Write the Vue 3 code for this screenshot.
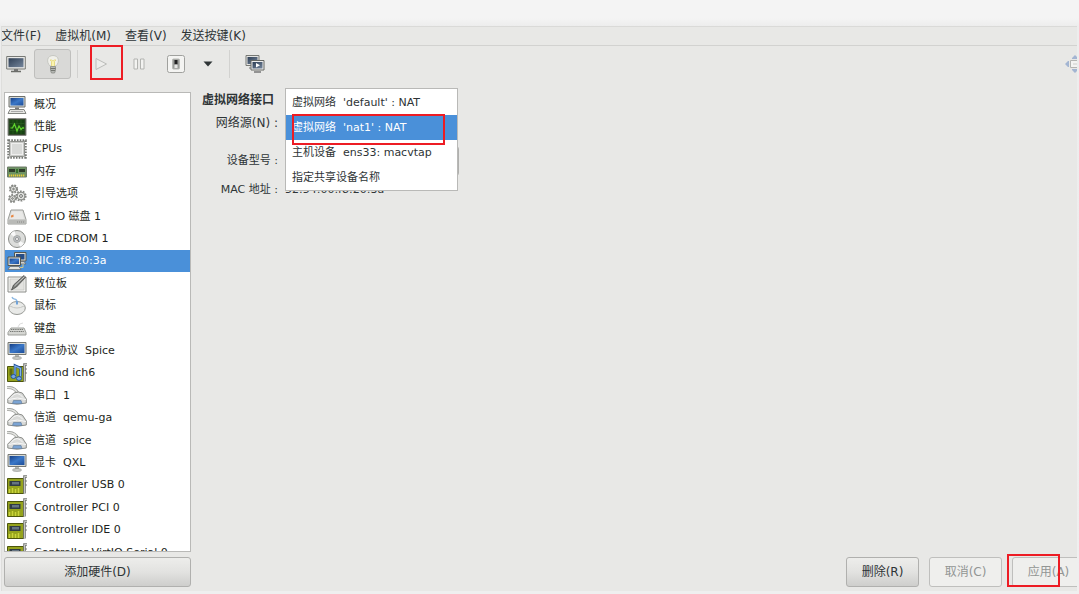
<script setup>
import { ref } from 'vue'

const menus = ['文件(F)', '虚拟机(M)', '查看(V)', '发送按键(K)']

const devices = [
  { icon: 'computer', label: '概况' },
  { icon: 'graph', label: '性能' },
  { icon: 'cpu', label: 'CPUs' },
  { icon: 'memory', label: '内存' },
  { icon: 'gears', label: '引导选项' },
  { icon: 'disk', label: 'VirtIO 磁盘 1' },
  { icon: 'cd', label: 'IDE CDROM 1' },
  { icon: 'nic', label: 'NIC :f8:20:3a' },
  { icon: 'tablet', label: '数位板' },
  { icon: 'mouse', label: '鼠标' },
  { icon: 'keyboard', label: '键盘' },
  { icon: 'display', label: '显示协议  Spice' },
  { icon: 'sound', label: 'Sound ich6' },
  { icon: 'serial', label: '串口  1' },
  { icon: 'serial', label: '信道  qemu-ga' },
  { icon: 'serial', label: '信道  spice' },
  { icon: 'display', label: '显卡  QXL' },
  { icon: 'card', label: 'Controller USB 0' },
  { icon: 'card', label: 'Controller PCI 0' },
  { icon: 'card', label: 'Controller IDE 0' },
  { icon: 'card', label: 'Controller VirtIO Serial 0' }
]
const current = ref(7)

const sources = [
  { value: 'default', label: "虚拟网络\u00a0\u00a0'default' : NAT" },
  { value: 'nat1', label: "虚拟网络\u00a0\u00a0'nat1' : NAT" },
  { value: 'ens33', label: '主机设备\u00a0\u00a0ens33: macvtap' },
  { value: 'shared', label: '指定共享设备名称' }
]
const source = ref('nat1')
</script>

<template>
  <div class="page">
    <svg class="defs" width="0" height="0" aria-hidden="true">
      <defs>
        <linearGradient id="blue" x1="0" y1="0" x2="1" y2="1">
          <stop offset="0" stop-color="#163f86" />
          <stop offset=".5" stop-color="#3b78c8" />
          <stop offset="1" stop-color="#1c4c98" />
        </linearGradient>
        <linearGradient id="slate" x1="0" y1="0" x2="1" y2="1">
          <stop offset="0" stop-color="#2f3f55" />
          <stop offset="1" stop-color="#75869c" />
        </linearGradient>
      </defs>
      <symbol id="i-computer" viewBox="0 0 20 20">
        <path d="M2 1.500h16v10.500H2z" fill="#d8dad5" stroke="#6e706c" />
        <path d="M3.500 3h13v7.500h-13z" fill="url(#blue)" />
        <path d="M8 12.500h4V15H8z" fill="#777" />
        <path d="M3 14.500h14l2 4H1z" fill="#e6e6e3" stroke="#858783" />
        <path d="M4 16.500h12" stroke="#aaa" />
      </symbol>
      <symbol id="i-display" viewBox="0 0 20 20">
        <path d="M1 1.500h18v12H1z" fill="#d8dad5" stroke="#777975" />
        <path d="M2.500 3h15v9h-15z" fill="url(#blue)" />
        <path d="M8 14h4v3H8z" fill="#b5b7b3" />
        <ellipse cx="10" cy="17" rx="4.500" ry="1.300" fill="#d5d6d2" stroke="#8c8e8a" stroke-width=".8" />
      </symbol>
      <symbol id="i-graph" viewBox="0 0 20 20">
        <path d="M1 1.500h18v17H1z" fill="#35482e" stroke="#888a85" />
        <path d="M2.500 3h15v14h-15z" fill="#174312" />
        <path d="M2.500 6.500h15M2.500 10h15M2.500 13.500h15M6 3v14M10 3v14M14 3v14" stroke="#2c6322" stroke-width=".6" />
        <path d="M3.500 11h2l2-4 2.500 7 2-5 2 3.500 2-2 1 1" fill="none" stroke="#5fd52c" stroke-width="1.200" />
      </symbol>
      <symbol id="i-cpu" viewBox="0 0 20 20">
        <rect x="1.500" y="1.500" width="17" height="17" fill="none" stroke="#777975" stroke-width="2.500" stroke-dasharray="1.600 1.200" />
        <rect x="2.500" y="2.500" width="15" height="15" rx="1" fill="#c9cac7" stroke="#8e908c" />
        <rect x="4.500" y="4.500" width="11" height="11" fill="#d9dad8" stroke="#efefee" />
      </symbol>
      <symbol id="i-memory" viewBox="0 0 20 20">
        <path d="M.5 5h19v10H.5z" fill="#6d9363" stroke="#6e7a68" />
        <path d="M2 7h6v3H2zM12 7h6v3h-6z" fill="#2d3d2a" />
        <path d="M9 7h2v4H9z" fill="#35712e" />
        <path d="M2 13.500h16" stroke="#e7ca3b" stroke-width="2" stroke-dasharray="1.300 .7" />
      </symbol>
      <symbol id="i-gears" viewBox="0 0 20 20">
        <g fill="none" stroke="#858783">
          <g stroke-width="2.200" stroke-dasharray="1.700 1.100">
            <circle cx="6.500" cy="5" r="3.500" />
            <circle cx="5.500" cy="14.500" r="3.300" />
            <circle cx="14" cy="12" r="4.500" />
          </g>
          <g fill="#e2e3e0">
            <circle cx="6.500" cy="5" r="3" />
            <circle cx="5.500" cy="14.500" r="2.800" />
            <circle cx="14" cy="12" r="3.900" />
          </g>
          <g fill="#fff" stroke="#6b6d69">
            <circle cx="6.500" cy="5" r=".8" />
            <circle cx="5.500" cy="14.500" r=".8" />
            <circle cx="14" cy="12" r="1.400" />
          </g>
        </g>
      </symbol>
      <symbol id="i-disk" viewBox="0 0 20 20">
        <path d="M4 3h12l3 9.500v4.500H1v-4.500z" fill="#dededc" stroke="#9b9d99" />
        <path d="M1.500 12.500h17V17h-17z" fill="#b9bab7" />
        <path d="M5 4.500h10l2 7.500H3z" fill="#e9e9e7" />
        <path d="M4 8.500l2.500-1V10L4 10.500z" fill="#e88945" />
        <path d="M10 15h7" stroke="#8a8a88" stroke-dasharray="1 1" />
      </symbol>
      <symbol id="i-cd" viewBox="0 0 20 20">
        <circle cx="10" cy="10" r="8.500" fill="#dcdddb" stroke="#8c8e8a" />
        <path d="M10 10L3.500 5a8 8 0 0 1 4-3zM10 10l7 4.500a8 8 0 0 1-4 3.300z" fill="#f9f9f9" />
        <circle cx="10" cy="10" r="3.500" fill="#bdc1c4" stroke="#999b98" stroke-width=".7" />
        <circle cx="10" cy="10" r="1.500" fill="#fff" stroke="#777" stroke-width=".7" />
      </symbol>
      <symbol id="i-nic" viewBox="0 0 20 20">
        <path d="M7.500 1.500H19v8.500H7.500z" fill="#deded9" stroke="#55574f" />
        <path d="M9 3h8.500v5.500H9z" fill="#264d87" />
        <path d="M12 10.500h5l2 2.500h-7z" fill="#d1d2cc" stroke="#666" stroke-width=".7" />
        <path d="M1 6h12.500v8.500H1z" fill="#deded9" stroke="#55574f" />
        <path d="M2.500 7.500H12V13H2.500z" fill="url(#blue)" />
        <path d="M3 15.500h9l2 3H1z" fill="#e2e3dd" stroke="#666" stroke-width=".7" />
        <path d="M13 16.500h3V13" fill="none" stroke="#d1c68b" />
      </symbol>
      <symbol id="i-tablet" viewBox="0 0 20 20">
        <path d="M1 3h18v15H1z" fill="#f6f6f4" stroke="#8b8d89" />
        <path d="M3 5h14v11H3z" fill="#e3e3e0" stroke="#c2c3bf" stroke-width=".7" />
        <path d="M4.500 16l2-5L17 1.500l1.500 2L9.500 13z" fill="#777a76" stroke="#444" stroke-width=".7" />
        <path d="M7.500 12L17.500 2.500" stroke="#ccc" />
      </symbol>
      <symbol id="i-mouse" viewBox="0 0 20 20">
        <path d="M5 1c1 4 5 0 5 5" fill="none" stroke="#8fb9e2" stroke-width="1.300" />
        <ellipse cx="10" cy="12" rx="8.300" ry="6.500" fill="#e9eae8" stroke="#959793" />
        <path d="M3 10q7 4 14 0" fill="none" stroke="#c5c6c3" />
        <path d="M9 5h2v3.500H9z" fill="#6fa2d8" />
      </symbol>
      <symbol id="i-keyboard" viewBox="0 0 20 20">
        <path d="M11 8q1-4 5-4" fill="none" stroke="#ddd" />
        <path d="M4 9h13l2 4.500V16H1v-2.500z" fill="#d5d6d2" stroke="#9d9f9b" />
        <path d="M4 10.500h12.500M3 12.500h14" stroke="#777975" stroke-width="1.200" stroke-dasharray="1.200 .6" />
      </symbol>
      <symbol id="i-card" viewBox="0 0 20 20">
        <path d="M.5 3.500h16v15H.5z" fill="#95a31d" stroke="#4d560d" />
        <path d="M2.500 6h11v5h-11z" fill="#303b45" />
        <path d="M5 7h7v2.500H5z" fill="#657482" />
        <path d="M2.500 18v-4M5.500 18v-5M8.500 18v-4M11.500 18v-5" fill="none" stroke="#c9d33b" stroke-width="1.500" />
        <path d="M20 1.500h-2.500v17" fill="none" stroke="#777975" stroke-width="2.600" />
        <path d="M20 1.500h-2.500v17" fill="none" stroke="#c4c6c2" />
        <path d="M18 6h2M18 10h2" stroke="#777" />
      </symbol>
      <symbol id="i-sound" viewBox="0 0 20 20">
        <path d="M.5 3.500h16v15H.5z" fill="#95a31d" stroke="#4d560d" />
        <path d="M2.500 5.500h3v7h-3z" fill="#5f6b12" />
        <path d="M20 1.500h-2.500v17" fill="none" stroke="#777975" stroke-width="2.600" />
        <path d="M20 1.500h-2.500v17" fill="none" stroke="#c4c6c2" />
        <path d="M18 6h2M18 10h2" stroke="#777" />
        <path d="M8 12.500V2.500l5.500 2.500v8.500" fill="none" stroke="#24549c" stroke-width="2.600" />
        <path d="M8 12.500V3l5.500 2.500v8" fill="none" stroke="#82b1ea" stroke-width="1.200" />
        <ellipse cx="6.500" cy="13.500" rx="2.500" ry="2" fill="#75a6e2" stroke="#24549c" />
        <ellipse cx="12" cy="15.500" rx="2.500" ry="2" fill="#75a6e2" stroke="#24549c" />
      </symbol>
      <symbol id="i-serial" viewBox="0 0 20 20">
        <path d="M0 1.500q8-.5 11 6" fill="none" stroke="#9d9f9b" stroke-width="3" />
        <path d="M0 1.500q8-.5 11 6" fill="none" stroke="#e4e5e2" stroke-width="1.500" />
        <path d="M.8 13l6-6q5-2 8.500 0l4 6v4q-9 2.500-18.500 0z" fill="#d9dad8" stroke="#8b8d89" />
        <path d="M4 11.500q3-4 6-4t6 4M1.500 13.500q9-3 17.500 0" fill="none" stroke="#f8f8f8" />
        <path d="M6.500 14.500h7.500l1 3H5.500z" fill="#7ba4d4" stroke="#64809f" stroke-width=".7" />
      </symbol>
    </svg>

    <div class="window">
      <nav class="menubar">
        <button v-for="menu in menus" :key="menu" type="button">{{ menu }}</button>
      </nav>

      <div class="toolbar">
        <button class="tool" type="button" aria-label="控制台">
          <svg width="20" height="20" viewBox="0 0 20 20">
            <path d="M.7 2.500h18.600v12.500H.7z" fill="#e9e9e7" stroke="#777975" />
            <path d="M2.500 4.200h15v9h-15z" fill="url(#slate)" />
            <path d="M8 15h4v2H8z" fill="#777" />
            <path d="M5 17.500h10" stroke="#6b6d69" stroke-width="1.500" />
          </svg>
        </button>
        <button class="tool wide pressed" type="button" aria-label="详情">
          <svg width="20" height="20" viewBox="0 0 20 20">
            <path d="M7 12C3 8 4 1.500 10 1.500S17 8 13 12z" fill="#f0f0ea" stroke="#c6c7c2" />
            <path d="M8.500 12V7.500L7 6h1.500l1.500 1 1.500-1H13l-1.500 1.500V12" fill="#fbf5ae" stroke="#e6da88" />
            <path d="M7.500 12.500h5v4l-1 2.500h-3l-1-2.500z" fill="#b5b7b3" stroke="#888a85" stroke-width=".8" />
            <path d="M7.500 14.500h5M8 16.500h4" stroke="#747671" />
          </svg>
        </button>
        <span class="rule"></span>
        <span class="marked">
          <button class="tool" type="button" disabled aria-label="运行">
            <svg width="20" height="20" viewBox="0 0 20 20">
              <path d="M5 4.500l10.500 5.500L5 15.500z" fill="#ededeb" stroke="#bcbdba" />
            </svg>
          </button>
          <i class="mark run"></i>
        </span>
        <button class="tool pause" type="button" disabled aria-label="暂停">
          <svg width="20" height="20" viewBox="0 0 20 20">
            <path d="M5 5h3.500v10H5zM11.500 5H15v10h-3.500z" fill="#f3f3f1" stroke="#b2b3b0" />
          </svg>
        </button>
        <button class="tool" type="button" aria-label="关机">
          <svg width="20" height="20" viewBox="0 0 20 20">
            <rect x="1.500" y="1.500" width="17" height="17" rx="2" fill="#f4f4f2" stroke="#a0a19e" />
            <rect x="6.500" y="5" width="7" height="10" rx="1" fill="#9b9d99" stroke="#b8b9b5" />
            <path d="M8.500 6h3v4.500h-3z" fill="#222" />
            <path d="M8.500 10.500h3V14h-3z" fill="#e6e6e4" />
          </svg>
        </button>
        <button class="tool arrow" type="button" aria-label="关机选项">
          <svg width="10" height="6" viewBox="0 0 10 6"><path d="M.5.5h9L5 5.500z" fill="#2e3436" /></svg>
        </button>
        <span class="rule last"></span>
        <button class="tool" type="button" aria-label="快照">
          <svg width="20" height="20" viewBox="0 0 20 20">
            <path d="M1 1.500h13v10H1z" fill="#e4e4e2" stroke="#777975" />
            <path d="M2.500 3h10v7h-10z" fill="url(#slate)" />
            <path d="M4 14h3" stroke="#777" />
            <path d="M6 6.500h13V16H6z" fill="#eee" stroke="#666864" />
            <path d="M7.500 8h10v6.500h-10z" fill="url(#slate)" />
            <path d="M11 9l4 2.200-4 2.300z" fill="#fff" />
            <path d="M9 18h7" stroke="#777" stroke-width="1.500" />
          </svg>
        </button>
        <button class="tool fullscreen" type="button" disabled aria-label="全屏">
          <svg width="20" height="20" viewBox="0 0 20 20">
            <path d="M0 10l3-3h1v6H3zM10 1L7 4v1h6V4zM10 19l-3-3v-1h6v1zM20 10l-3-3h-1v6h1z" fill="#a3b5d2" />
            <path d="M5.500 6.500h9v7h-9z" fill="#f4f4f2" stroke="#b4b5b2" />
            <path d="M8 9h4v2H8z" fill="#e0e0de" />
          </svg>
        </button>
      </div>

      <main class="content">
        <aside class="sidebar">
          <div class="devices">
            <button
              v-for="(device, index) in devices"
              :key="device.label"
              type="button"
              class="device"
              :class="{ selected: index === current }"
              @click="current = index"
            >
              <svg width="20" height="20"><use :href="'#i-' + device.icon" /></svg>
              <span>{{ device.label }}</span>
            </button>
          </div>
          <button class="push" type="button">添加硬件(D)</button>
        </aside>

        <section class="details">
          <form class="form" @submit.prevent>
            <h1>虚拟网络接口</h1>
            <label class="source-label" for="source">网络源(N) :</label>
            <label class="model-label" for="model">设备型号 :</label>
            <select id="model" class="model"><option>virtio</option></select>
            <label class="mac-label" for="mac">MAC 地址 :</label>
            <output id="mac" class="mac">52:54:00:f8:20:3a</output>
            <div class="popup">
              <select id="source" v-model="source" size="4">
                <option v-for="item in sources" :key="item.value" :value="item.value">{{ item.label }}</option>
              </select>
              <i class="mark choice"></i>
            </div>
          </form>
          <footer class="actions">
            <button class="push" type="button">删除(R)</button>
            <button class="push" type="button" disabled>取消(C)</button>
            <span class="marked">
              <button class="push" type="button" disabled>应用(A)</button>
              <i class="mark apply"></i>
            </span>
          </footer>
        </section>
      </main>
    </div>
  </div>
</template>

<style>
body {
  margin: 0;
  background: #f4f4f4;
}
</style>

<style scoped>
.page {
  box-sizing: border-box;
  height: 100vh;
  padding: 26px 2px 3px 1px;
  overflow: hidden;
  background: linear-gradient(#f4f4f4 18px, #ededed 26px, #efefef 100%);
  color: #2e3436;
  font: 11px/16px "DejaVu Sans", "Noto Sans CJK SC", sans-serif;
}
.defs {
  position: absolute;
}
button,
select {
  margin: 0;
  font: inherit;
  color: inherit;
}
button {
  padding: 0;
  border: 0;
  background: none;
}
.window {
  box-sizing: border-box;
  display: flex;
  flex-direction: column;
  height: 100%;
  overflow: hidden;
  border-top: 1px solid #dadad8;
  border-left: 1px solid #dededc;
  background: #e8e8e6;
}
.menubar {
  display: flex;
  gap: 14px;
  height: 18px;
  flex: none;
  border-bottom: 1px solid #d2d2d0;
  font-size: 12px;
}
.menubar button {
  line-height: 16px;
  white-space: nowrap;
}
.menubar button:first-child {
  margin-left: -1px;
}
.toolbar {
  display: flex;
  align-items: center;
  flex: none;
  height: 36px;
  padding-left: 4px;
}
.tool {
  display: flex;
  align-items: center;
  justify-content: center;
  flex: none;
  width: 20px;
  height: 30px;
}
.wide {
  box-sizing: border-box;
  width: 37px;
  margin-left: 8px;
}
.pressed {
  border: 1px solid #bfbfbd;
  border-radius: 3px;
  background: #d9d9d7;
}
.rule {
  width: 1px;
  height: 28px;
  margin: 0 13px 0 6px;
  background: #d2d2d0;
}
.rule.last {
  margin: 0 15px 0 16px;
}
.pause {
  margin: 0 17px 0 18px;
}
.arrow {
  width: 10px;
  margin-left: 17px;
}
.fullscreen {
  margin: 0 -8px 0 auto;
}
.marked {
  position: relative;
  display: flex;
}
.mark {
  position: absolute;
  box-sizing: border-box;
  border: 2px solid #ed1c24;
  pointer-events: none;
}
.run {
  top: -4px;
  left: -1px;
  width: 33px;
  height: 35px;
}
.choice {
  top: 26px;
  left: 7px;
  width: 153px;
  height: 31px;
}
.apply {
  top: -3px;
  left: -5px;
  width: 53px;
  height: 33px;
}
.content {
  display: flex;
  gap: 11px;
  flex: 1;
  min-height: 0;
  padding: 6px 0 4px 2px;
}
.sidebar {
  display: flex;
  flex-direction: column;
  gap: 5px;
  flex: none;
  width: 187px;
  padding-top: 4px;
}
.devices {
  flex: 1;
  min-height: 0;
  overflow: hidden;
  border: 1px solid #b9b9b7;
  background: #fff;
  color: #1d1f20;
}
.device {
  display: flex;
  align-items: center;
  gap: 7px;
  width: 100%;
  height: 22px;
  padding-left: 2px;
  text-align: left;
  white-space: pre;
}
.device:nth-child(5n + 1),
.device:nth-child(5n + 4) {
  height: 23px;
}
.device svg {
  flex: none;
}
.selected {
  background: #4a90d9;
  color: #fff;
}
.push {
  box-sizing: border-box;
  height: 30px;
  border: 1px solid #b0b0ae;
  border-radius: 3px;
  background: linear-gradient(#ededeb, #e2e2e0 50%, #cececc);
  font-size: 12px;
}
.push:disabled {
  border-color: #bfbfbd;
  background: #efefed;
  color: #929594;
}
.details {
  display: flex;
  flex-direction: column;
  justify-content: space-between;
  flex: 1;
  min-width: 0;
}
.form {
  position: relative;
  display: grid;
  grid-template-columns: 76px 173px;
  grid-template-rows: 24px 22px 12px 30px 28px;
  column-gap: 7px;
  align-items: center;
}
h1 {
  grid-column: 1 / -1;
  margin: 0;
  font-size: 12px;
  line-height: 16px;
}
.form label {
  grid-column: 1;
  text-align: right;
  white-space: nowrap;
}
.form .source-label {
  font-size: 12px;
}
.model-label,
.model {
  grid-row: 4;
}
.model {
  grid-column: 2;
  width: 174px;
  height: 30px;
  border: 1px solid #b0b0ae;
  border-radius: 3px;
  background: #e6e6e4;
}
.mac-label,
.mac {
  grid-row: 5;
}
.mac {
  grid-column: 2;
}
.popup {
  position: absolute;
  top: 0;
  left: 83px;
}
.popup select {
  box-sizing: border-box;
  display: block;
  width: 173px;
  height: 103px;
  padding: 1px 0;
  overflow: hidden;
  border: 1px solid #b9b9b7;
  border-radius: 0;
  outline: 0;
  background: #fff;
}
.popup option {
  min-height: 0;
  padding: 3px 6px 6px;
  line-height: 16px;
  white-space: pre;
}
.popup option:checked {
  background: linear-gradient(#4a90d9, #4a90d9);
  color: #fff;
}
.actions {
  display: flex;
  justify-content: flex-end;
  gap: 10px;
  margin-right: -8px;
}
.actions .push {
  width: 73px;
}
</style>
